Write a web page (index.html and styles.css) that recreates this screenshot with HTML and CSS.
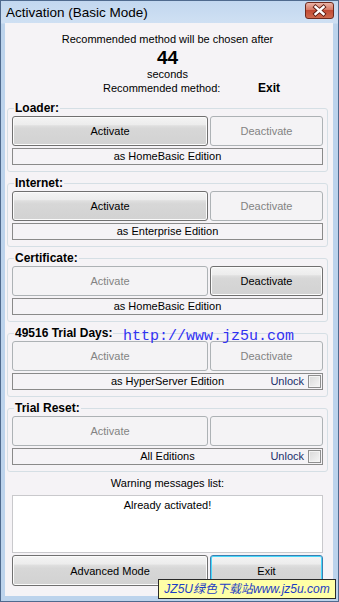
FILE: index.html
```html
<!DOCTYPE html>
<html lang="en">
<head>
    <meta charset="UTF-8">
    <meta name="viewport" content="width=device-width, initial-scale=1.0">
    <title>Activation (Basic Mode)</title>
    <link rel="stylesheet" href="styles.css">
</head>
<body>

<div class="window">
    <div class="titlebar">
        <span class="title">Activation (Basic Mode)</span>
        <span class="close">
            <svg width="27" height="15" viewBox="0 0 27 15">
                <path d="M9.5 4 L17.5 11 M17.5 4 L9.5 11" stroke="#5a1a10" stroke-width="4.2" stroke-linecap="square"/>
                <path d="M9.5 4 L17.5 11 M17.5 4 L9.5 11" stroke="#ffffff" stroke-width="2.4" stroke-linecap="square"/>
            </svg>
        </span>
    </div>

    <div class="client">
        <div class="countdown">
            <div class="line">Recommended method will be chosen after</div>
            <div class="seconds-left">44</div>
            <div class="line">seconds</div>
            <div class="recommend"><span>Recommended method:</span><b>Exit</b></div>
        </div>

        <fieldset class="group">
            <legend>Loader:</legend>
            <div class="buttons">
                <button class="btn">Activate</button>
                <button class="btn" disabled>Deactivate</button>
            </div>
            <div class="edition"><span class="edition-name">as HomeBasic Edition</span></div>
        </fieldset>

        <fieldset class="group">
            <legend>Internet:</legend>
            <div class="buttons">
                <button class="btn">Activate</button>
                <button class="btn" disabled>Deactivate</button>
            </div>
            <div class="edition"><span class="edition-name">as Enterprise Edition</span></div>
        </fieldset>

        <fieldset class="group">
            <legend>Certificate:</legend>
            <div class="buttons">
                <button class="btn" disabled>Activate</button>
                <button class="btn">Deactivate</button>
            </div>
            <div class="edition"><span class="edition-name">as HomeBasic Edition</span></div>
        </fieldset>

        <fieldset class="group">
            <legend>49516 Trial Days:</legend>
            <div class="buttons">
                <button class="btn" disabled>Activate</button>
                <button class="btn" disabled>Deactivate</button>
            </div>
            <div class="edition">
                <span class="edition-name">as HyperServer Edition</span>
                <label class="unlock">Unlock <span class="check"></span></label>
            </div>
        </fieldset>

        <fieldset class="group">
            <legend>Trial Reset:</legend>
            <div class="buttons">
                <button class="btn" disabled>Activate</button>
                <button class="btn" disabled></button>
            </div>
            <div class="edition">
                <span class="edition-name">All Editions</span>
                <label class="unlock">Unlock <span class="check"></span></label>
            </div>
        </fieldset>

        <div class="warnings-title">Warning messages list:</div>
        <div class="warnings">Already activated!</div>

        <div class="buttons bottom">
            <button class="btn">Advanced Mode</button>
            <button class="btn focused">Exit</button>
        </div>
    </div>

    <!-- watermarks over the window -->
    <div class="mark-url">http://www.jz5u.com</div>
    <div class="mark-badge">JZ5U绿色下载站www.jz5u.com</div>
</div>

</body>
</html>
```

FILE: styles.css
```css
body {
    margin: 0;
    font-family: "Liberation Sans", Arial, sans-serif;
    font-size: 11px;
    color: #000;
}
.window {
    position: relative;
    width: 339px;
    height: 602px;
    box-sizing: border-box;
    border: 1px solid #4f6a8e;
    background: linear-gradient(#c2d7ef, #cfe0f3 22px, #bcd3ec 23px, #bcd3ec);
    padding: 0 5px 5px 4px;
    display: flex;
    flex-direction: column;
}
.titlebar {
    height: 22px;
    display: flex;
    align-items: center;
    justify-content: space-between;
    flex-shrink: 0;
}
.title {
    font-size: 13.5px;
    padding-left: 1px;
    padding-top: 1px;
}
.close {
    width: 27px;
    height: 15px;
    margin-right: -1px;
    margin-top: -3px;
    border: 1px solid #6e2a1e;
    border-radius: 3px;
    background: linear-gradient(#eab3a6, #d77a66 45%, #c24b34 50%, #cf6a4e);
    display: flex;
}
.client {
    flex: 1;
    background: #f5f3f6;
    padding: 9px 5px 0 2px;
    display: flex;
    flex-direction: column;
}
.countdown {
    text-align: center;
}
.line {
    line-height: 14px;
}
.seconds-left {
    margin-top: 3px;
    font-size: 19px;
    font-weight: bold;
    line-height: 18px;
}
.recommend {
    display: flex;
    line-height: 14px;
    padding-left: 96px;
}
.recommend span {
    width: 155px;
    text-align: left;
}
.recommend b {
    font-size: 12px;
}
.group {
    margin: 6px 0 0;
    padding: 1px 4px 6px;
    border: 1px solid #d5dfe5;
    border-radius: 3px;
    min-width: 0;
}
.group + .group {
    margin-top: 4px;
}
.group legend {
    font-size: 12px;
    font-weight: bold;
    line-height: 14px;
    padding: 0 1px;
    margin-left: 2px;
}
.buttons {
    display: grid;
    grid-template-columns: 196px 1fr;
    gap: 2px;
}
.btn {
    height: 30px;
    margin: 0;
    padding: 0;
    border: 1px solid #707070;
    border-radius: 3px;
    background: linear-gradient(#f4f4f4, #ececec 28%, #dfdfdf 31%, #d7d7d7 42%, #d2d2d2);
    box-shadow: inset 0 0 0 1px #fbfbfb;
    font-family: inherit;
    font-size: 11px;
    color: #000;
}
.btn:disabled {
    border-color: #adb2b5;
    background: #f4f3f5;
    box-shadow: none;
    color: #838383;
}
.btn.focused {
    border-color: #3c7fb1;
    box-shadow: inset 0 0 0 1px #48d8fb;
}
.edition {
    margin-top: 2px;
    height: 17px;
    box-sizing: border-box;
    border: 1px solid #8a8a8a;
    display: grid;
    grid-template-columns: 1fr auto 1fr;
    align-items: center;
    line-height: 15px;
}
.edition-name {
    grid-column: 2;
}
.unlock {
    grid-column: 3;
    justify-self: end;
    display: flex;
    align-items: center;
    gap: 4px;
    color: #1b2f6b;
    padding-right: 1px;
}
.check {
    width: 13px;
    height: 13px;
    box-sizing: border-box;
    border: 1px solid #8f8f8f;
    background: linear-gradient(135deg, #d9d9d9, #f6f6f6);
    box-shadow: inset 0 0 0 1px #f4f4f4;
}
.warnings-title {
    margin-top: 4px;
    text-align: center;
    line-height: 14px;
}
.warnings {
    margin: 5px 5px 0;
    height: 58px;
    box-sizing: border-box;
    background: #fff;
    border: 1px solid #c9c9cc;
    text-align: center;
    line-height: 18px;
}
.bottom {
    margin: 2px 5px 0;
}
.bottom .btn {
    height: 31px;
}
.mark-url {
    position: absolute;
    left: 122px;
    top: 327px;
    font-family: "Liberation Mono", monospace;
    font-size: 15px;
    line-height: 18px;
    color: #3131f2;
}
.mark-badge {
    position: absolute;
    left: 157px;
    top: 578px;
    width: 178px;
    height: 20px;
    box-sizing: border-box;
    border: 1px solid #2a2a2a;
    background: #ffffa6;
    font-family: "Liberation Sans", "Noto Sans CJK SC", sans-serif;
    font-size: 12px;
    font-style: italic;
    line-height: 18px;
    color: #1c3cc4;
    text-align: center;
    white-space: nowrap;
    overflow: hidden;
}
```
